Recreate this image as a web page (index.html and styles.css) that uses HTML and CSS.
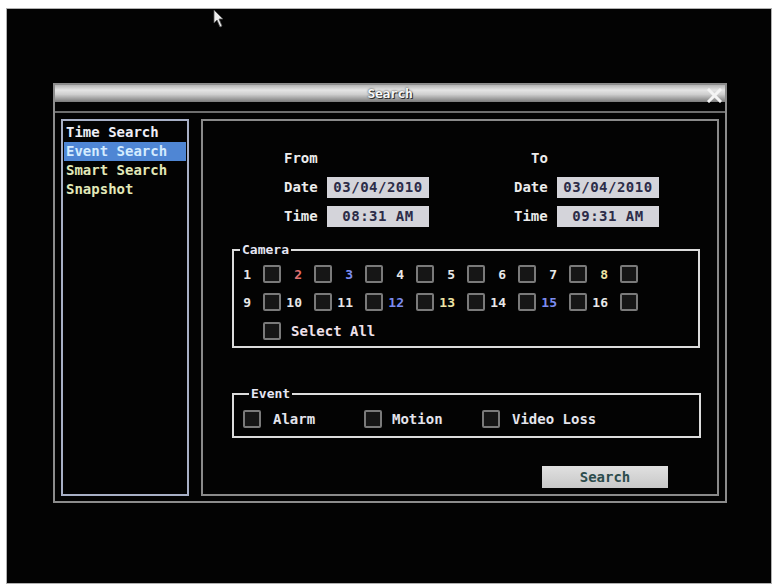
FILE: index.html
```html
<!DOCTYPE html>
<html lang="en">
<head>
  <meta charset="UTF-8">
  <title>Search</title>
  <link rel="stylesheet" href="styles.css">
</head>
<body>

<div class="screen">
  <svg class="cursor" width="12" height="20" viewBox="0 0 12 20">
    <path d="M1 1 L1 14 L4 11 L7 18 L9 17 L6 10 L10 10 Z" fill="#eee" stroke="#555" stroke-width="0.8"/>
  </svg>

  <div class="dialog">
    <div class="titlebar">
      <span class="title">Search</span>
      <svg class="close" width="15" height="15" viewBox="0 0 15 15">
        <path d="M2 2 L13 13 M13 2 L2 13" stroke="#f4f4f4" stroke-width="3" stroke-linecap="square"/>
      </svg>
    </div>

    <div class="body">
      <ul class="menu">
        <li>Time Search</li>
        <li class="active">Event Search</li>
        <li class="dim">Smart Search</li>
        <li class="dim">Snapshot</li>
      </ul>

      <div class="panel">
        <div class="range">
          <div class="range-col">
            <div class="range-head">From</div>
            <div class="range-row"><span class="lbl">Date</span><span class="field">03/04/2010</span></div>
            <div class="range-row"><span class="lbl">Time</span><span class="field">08:31 AM</span></div>
          </div>
          <div class="range-col">
            <div class="range-head to">To</div>
            <div class="range-row"><span class="lbl">Date</span><span class="field">03/04/2010</span></div>
            <div class="range-row"><span class="lbl">Time</span><span class="field">09:31 AM</span></div>
          </div>
        </div>

        <fieldset class="group camera">
          <legend>Camera</legend>
          <div class="cams">
            <div class="cam"><span class="num">1</span><span class="box"></span></div>
            <div class="cam"><span class="num red">2</span><span class="box"></span></div>
            <div class="cam"><span class="num blue">3</span><span class="box"></span></div>
            <div class="cam"><span class="num">4</span><span class="box"></span></div>
            <div class="cam"><span class="num">5</span><span class="box"></span></div>
            <div class="cam"><span class="num">6</span><span class="box"></span></div>
            <div class="cam"><span class="num">7</span><span class="box"></span></div>
            <div class="cam"><span class="num yellow">8</span><span class="box"></span></div>
            <div class="cam"><span class="num">9</span><span class="box"></span></div>
            <div class="cam"><span class="num">10</span><span class="box"></span></div>
            <div class="cam"><span class="num">11</span><span class="box"></span></div>
            <div class="cam"><span class="num blue">12</span><span class="box"></span></div>
            <div class="cam"><span class="num yellow">13</span><span class="box"></span></div>
            <div class="cam"><span class="num">14</span><span class="box"></span></div>
            <div class="cam"><span class="num blue">15</span><span class="box"></span></div>
            <div class="cam"><span class="num">16</span><span class="box"></span></div>
          </div>
          <div class="select-all"><span class="box"></span><span class="pink">Select All</span></div>
        </fieldset>

        <fieldset class="group event">
          <legend>Event</legend>
          <div class="events">
            <div class="ev ev-alarm"><span class="box"></span>Alarm</div>
            <div class="ev ev-motion"><span class="box"></span>Motion</div>
            <div class="ev"><span class="box"></span>Video Loss</div>
          </div>
        </fieldset>

        <div class="actions">
          <button class="search-btn">Search</button>
        </div>
      </div>
    </div>
  </div>
</div>

</body>
</html>
```

FILE: styles.css
```css
body {
  margin: 0;
  background: #fff;
  font-family: "DejaVu Sans Mono", "Liberation Mono", monospace;
  font-weight: bold;
  font-size: 14px;
  color: #ececec;
}

.screen {
  position: relative;
  box-sizing: border-box;
  width: 766px;
  height: 576px;
  margin: 8px 0 0 6px;
  padding: 74px 0 0 46px;
  background: #030303;
  border: 1px solid #b0b0b0;
}

.cursor {
  position: absolute;
  left: 206px;
  top: 0;
}

.dialog {
  box-sizing: border-box;
  width: 674px;
  height: 420px;
  border: 2px solid #8c8c8c;
  display: flex;
  flex-direction: column;
}

.titlebar {
  height: 17px;
  display: flex;
  align-items: center;
  justify-content: center;
  position: relative;
  background: linear-gradient(#b4b4b4 0%, #e4e4e4 30%, #cfcfcf 55%, #7a7a7a 100%);
}

.title {
  font-size: 13px;
  color: #f8f8f8;
  text-shadow: 0 0 2px #222, 1px 1px 0 #333;
  letter-spacing: -0.3px;
}

.close {
  position: absolute;
  right: 3px;
  top: 3px;
}

.body {
  flex: 1;
  margin-top: 9px;
  border-top: 2px solid #6e6e6e;
  padding: 6px 6px 5px 6px;
  display: flex;
  gap: 12px;
}

/* left menu */
.menu {
  list-style: none;
  margin: 0;
  padding: 1px;
  width: 129px;
  box-sizing: border-box;
  border: 2px solid #a8b0c6;
}

.menu li {
  height: 19px;
  line-height: 19px;
  padding-left: 2px;
  white-space: nowrap;
  color: #eeeef6;
}

.menu li:first-child {
  margin-top: 1px;
}

.menu li.active {
  background: #4f86d4;
  color: #d4ecff;
}

.menu li.dim {
  color: #e2e8b8;
}

/* right panel */
.panel {
  flex: 1;
  box-sizing: border-box;
  border: 2px solid #8a8a8a;
  padding: 27px 16px 0 29px;
  display: flex;
  flex-direction: column;
}

.range {
  display: flex;
  gap: 85px;
  padding-left: 52px;
}

.range-col {
  display: flex;
  flex-direction: column;
  gap: 8px;
}

.range-head {
  height: 21px;
  line-height: 21px;
}

.range-head.to {
  padding-left: 17px;
}

.range-row {
  display: flex;
  height: 21px;
  line-height: 21px;
}

.lbl {
  width: 43px;
}

.field {
  width: 102px;
  text-align: center;
  background: #d4d4da;
  color: #2c2c48;
  letter-spacing: 0.5px;
}

.group {
  margin: 0;
  padding: 0;
  border: 2px solid #dcdcdc;
  min-width: 0;
}

.group legend {
  margin-left: 6px;
  padding: 0 2px;
  line-height: 16px;
  font-size: 13px;
  color: #e6e6f4;
}

.camera {
  width: 468px;
  box-sizing: border-box;
  margin-top: 15px;
  padding: 7px 0 6px 0;
}

.cams {
  display: grid;
  grid-template-columns: repeat(8, 47px);
  gap: 10px 4px;
}

.cam {
  display: flex;
  align-items: center;
  height: 18px;
}

.num {
  width: 17px;
  margin-right: 12px;
  text-align: right;
  font-size: 13px;
  color: #e8e8e8;
}

.red { color: #e07070; }
.blue { color: #7c8cf0; }
.yellow { color: #eee4a4; }
.pink { color: #efe0ea; }

.box {
  box-sizing: border-box;
  width: 18px;
  height: 18px;
  border: 2px solid #7a7a7a;
  border-radius: 2px;
  background: #161616;
}

.select-all {
  display: flex;
  align-items: center;
  gap: 10px;
  height: 18px;
  margin-top: 11px;
  padding-left: 29px;
}

.event {
  width: 469px;
  box-sizing: border-box;
  margin-top: 38px;
  padding: 8px 0 8px 9px;
}

.events {
  display: flex;
}

.ev {
  display: flex;
  align-items: center;
  gap: 12px;
  height: 18px;
  color: #e4e4ec;
}

.ev-alarm { width: 121px; }
.ev-motion { width: 118px; gap: 10px; }

.actions {
  display: flex;
  justify-content: flex-end;
  padding-right: 33px;
  margin-top: 28px;
}

.search-btn {
  width: 126px;
  height: 22px;
  border: none;
  background: linear-gradient(#e0e0e0, #c8c8c8);
  color: #2c4c4c;
  font-family: "DejaVu Sans Mono", "Liberation Mono", monospace;
  font-weight: bold;
  font-size: 14px;
  padding: 0;
}
```
